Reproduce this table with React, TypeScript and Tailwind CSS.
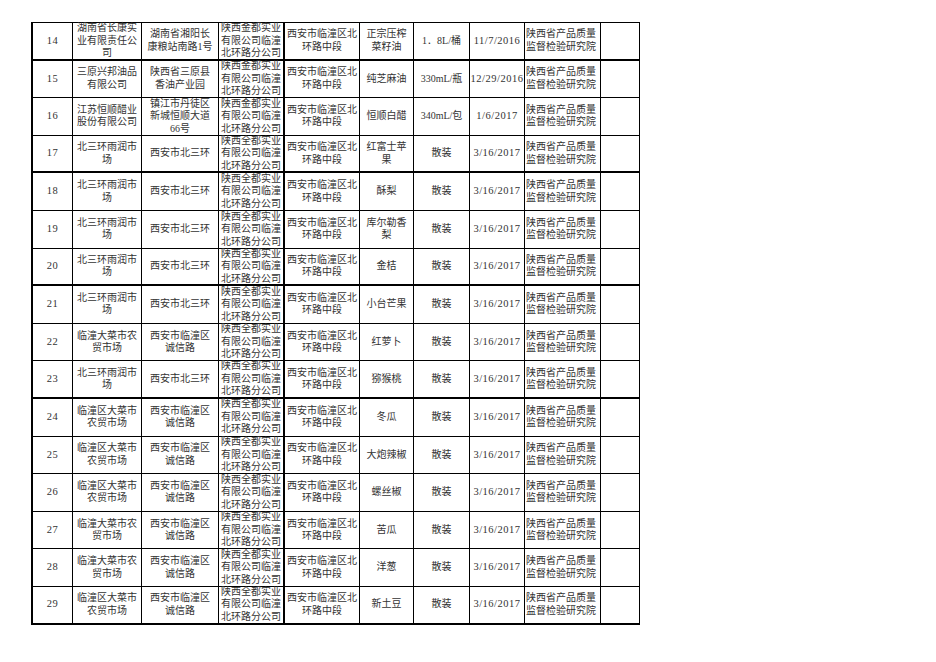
type Row = {
  no: string;
  unit: string[];
  addr: string[];
  seller: string[];
  product: string[];
  spec: string;
  date: string;
};

const JD = ['陕西金都实业', '有限公司临潼', '北环路分公司'];
const QD = ['陕西全都实业', '有限公司临潼', '北环路分公司'];
const BSH = ['北三环雨润市', '场'];
const XABSH = ['西安市北三环'];
const LT1 = ['临潼大菜市农', '贸市场'];
const LT2 = ['临潼区大菜市', '农贸市场'];
const CXL = ['西安市临潼区', '诚信路'];

const rows: Row[] = [
  { no: '14', unit: ['湖南省长康实', '业有限责任公', '司'], addr: ['湖南省湘阳长', '康粮站南路1号'], seller: JD, product: ['正宗压榨', '菜籽油'], spec: '1．8L/桶', date: '11/7/2016' },
  { no: '15', unit: ['三原兴邦油品', '有限公司'], addr: ['陕西省三原县', '香油产业园'], seller: JD, product: ['纯芝麻油'], spec: '330mL/瓶', date: '12/29/2016' },
  { no: '16', unit: ['江苏恒顺醋业', '股份有限公司'], addr: ['镇江市丹徒区', '新城恒顺大道', '66号'], seller: JD, product: ['恒顺白醋'], spec: '340mL/包', date: '1/6/2017' },
  { no: '17', unit: BSH, addr: XABSH, seller: QD, product: ['红富士苹', '果'], spec: '散装', date: '3/16/2017' },
  { no: '18', unit: BSH, addr: XABSH, seller: QD, product: ['酥梨'], spec: '散装', date: '3/16/2017' },
  { no: '19', unit: BSH, addr: XABSH, seller: QD, product: ['库尔勒香', '梨'], spec: '散装', date: '3/16/2017' },
  { no: '20', unit: BSH, addr: XABSH, seller: QD, product: ['金桔'], spec: '散装', date: '3/16/2017' },
  { no: '21', unit: BSH, addr: XABSH, seller: QD, product: ['小台芒果'], spec: '散装', date: '3/16/2017' },
  { no: '22', unit: LT1, addr: CXL, seller: QD, product: ['红萝卜'], spec: '散装', date: '3/16/2017' },
  { no: '23', unit: BSH, addr: XABSH, seller: QD, product: ['猕猴桃'], spec: '散装', date: '3/16/2017' },
  { no: '24', unit: LT2, addr: CXL, seller: QD, product: ['冬瓜'], spec: '散装', date: '3/16/2017' },
  { no: '25', unit: LT2, addr: CXL, seller: QD, product: ['大炮辣椒'], spec: '散装', date: '3/16/2017' },
  { no: '26', unit: LT2, addr: CXL, seller: QD, product: ['螺丝椒'], spec: '散装', date: '3/16/2017' },
  { no: '27', unit: LT1, addr: CXL, seller: QD, product: ['苦瓜'], spec: '散装', date: '3/16/2017' },
  { no: '28', unit: LT1, addr: CXL, seller: QD, product: ['洋葱'], spec: '散装', date: '3/16/2017' },
  { no: '29', unit: LT2, addr: CXL, seller: QD, product: ['新土豆'], spec: '散装', date: '3/16/2017' },
];

// rows whose bottom rule is drawn heavier in the sheet
const thick = new Set([0, 3, 6, 9, 15]);

function Cell({ lines, thickBottom, thickRight, left, num }: { lines: string[]; thickBottom: boolean; thickRight?: boolean; left?: boolean; num?: boolean }) {
  return (
    <div
      className={`flex items-center ${left ? 'justify-start pl-[1px] text-left' : 'justify-center text-center'} border-black border-r border-b ${thickBottom ? 'border-b-2' : ''} ${thickRight ? 'border-r-2' : ''} ${num ? 'text-[10.5px] tracking-[0.5px]' : ''} overflow-visible whitespace-nowrap`}
    >
      <div>
        {lines.map((l, i) => (
          <span key={i} className="block">{l}</span>
        ))}
      </div>
    </div>
  );
}

export default function App() {
  return (
    <div className="w-[936px] h-[662px] bg-white pt-[22px] pl-[31px]">
      <div
        className="grid grid-cols-[40px_69px_77px_66px_75px_54px_56px_55px_76px_39px] auto-rows-[37.6px] w-[609px] border-l-2 border-t border-black text-[10px] leading-[12.5px] text-[#333]"
        style={{ fontFamily: '"Liberation Serif", "Noto Sans CJK SC", serif' }}
      >
        {rows.map((r, i) => {
          const tb = thick.has(i);
          return [
            <Cell key={`${i}a`} lines={[r.no]} thickBottom={tb} num />,
            <Cell key={`${i}b`} lines={r.unit} thickBottom={tb} />,
            <Cell key={`${i}c`} lines={r.addr} thickBottom={tb} />,
            <Cell key={`${i}d`} lines={r.seller} thickBottom={tb} thickRight />,
            <Cell key={`${i}e`} lines={['西安市临潼区北', '环路中段']} thickBottom={tb} />,
            <Cell key={`${i}f`} lines={r.product} thickBottom={tb} />,
            <Cell key={`${i}g`} lines={[r.spec]} thickBottom={tb} />,
            <Cell key={`${i}h`} lines={[r.date]} thickBottom={tb} num />,
            <Cell key={`${i}i`} lines={['陕西省产品质量', '监督检验研究院']} thickBottom={tb} left />,
            <Cell key={`${i}j`} lines={[]} thickBottom={tb} />,
          ];
        })}
      </div>
    </div>
  );
}
